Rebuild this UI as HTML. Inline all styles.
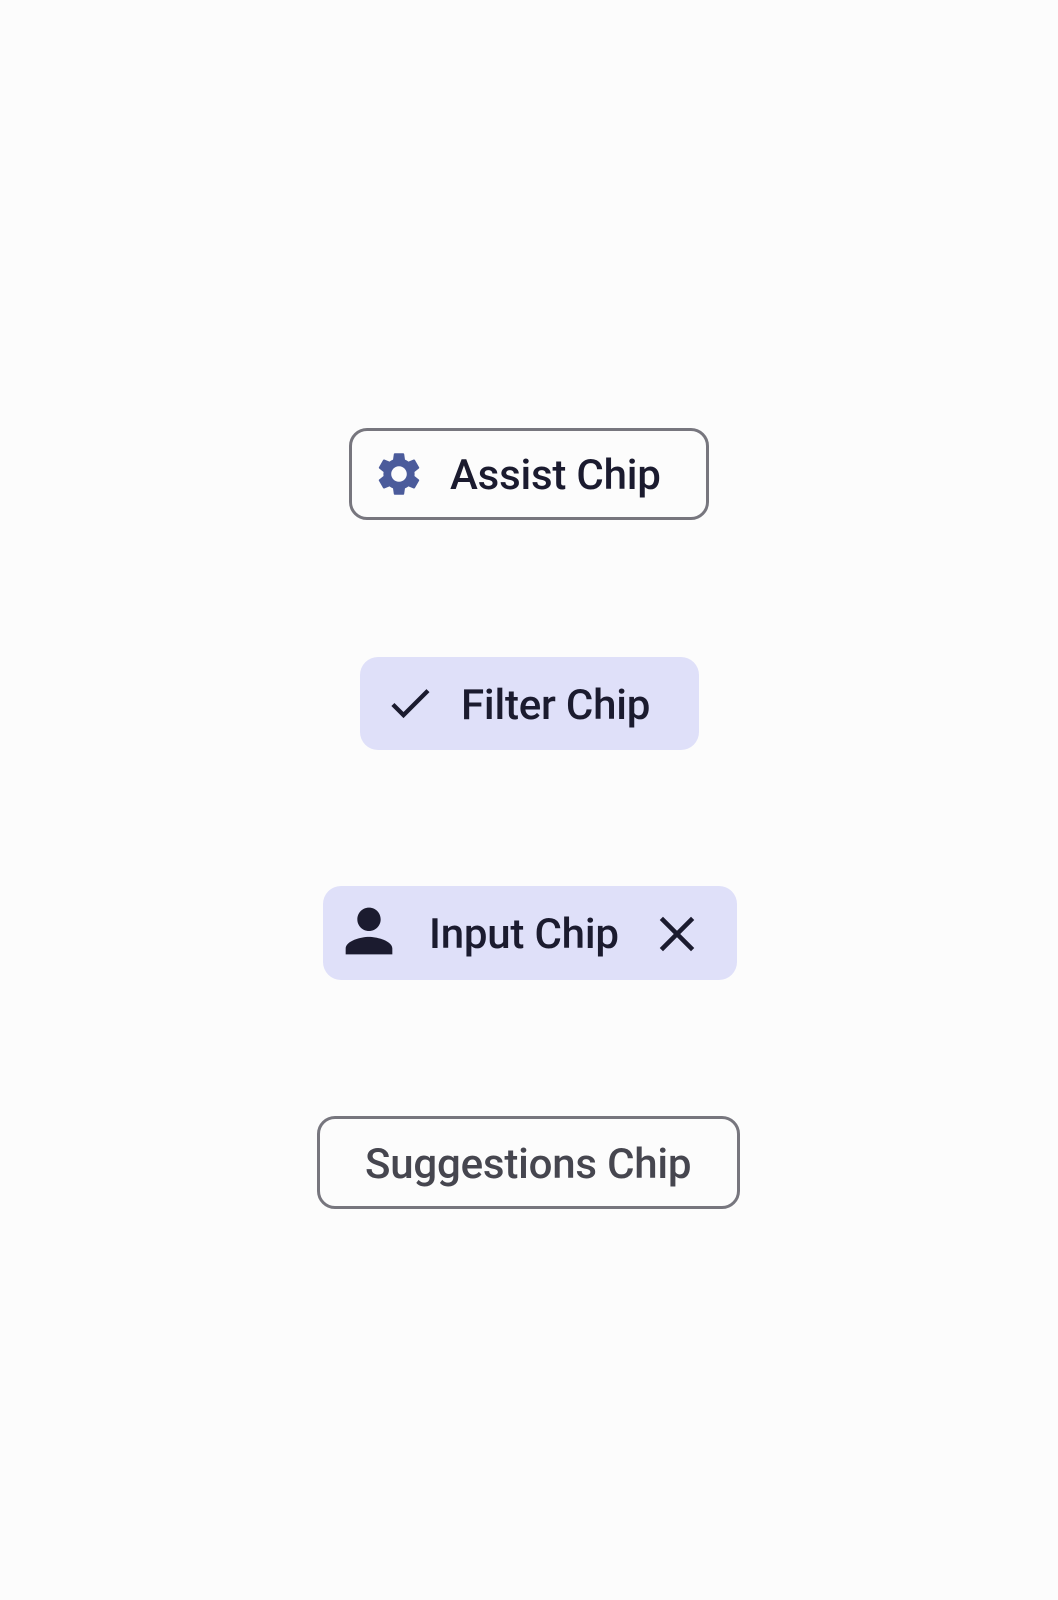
<!DOCTYPE html>
<html><head><style>
html,body{margin:0;padding:0;background:#fcfcfc;width:1058px;height:1600px;overflow:hidden;font-family:Roboto,"Liberation Sans",sans-serif}
.chip{position:absolute;box-sizing:border-box;border-radius:18px}
.t{position:absolute;font-size:42px;font-weight:500;color:#1b1b2f;white-space:nowrap;line-height:1;letter-spacing:-0.2px}
svg{position:absolute}
</style></head><body>
<div class="chip" style="left:349px;top:428px;width:360px;height:92px;border:3px solid #77767e;"></div>
<svg style="left:373px;top:448px" width="52" height="52" viewBox="0 0 24 24"><path fill="#4b5b9b" d="M19.14 12.94c.04-.3.06-.61.06-.94 0-.32-.02-.64-.07-.94l2.03-1.58a.49.49 0 0 0 .12-.61l-1.92-3.32a.49.49 0 0 0-.59-.22l-2.39.96c-.5-.38-1.030-.7-1.62-.94l-.36-2.54a.48.48 0 0 0-.48-.41h-3.84c-.24 0-.43.17-.47.41l-.36 2.54c-.59.24-1.13.57-1.62.94l-2.39-.96a.48.48 0 0 0-.59.22L2.74 8.870c-.12.21-.08.47.12.61l2.03 1.58c-.05.3-.09.63-.09.94s.02.64.07.94l-2.03 1.58a.49.49 0 0 0-.12.61l1.92 3.32c.12.22.37.29.59.22l2.39-.96c.5.38 1.03.7 1.62.94l.36 2.54c.05.24.24.41.48.41h3.84c.24 0 .44-.17.47-.41l.36-2.54c.59-.24 1.13-.56 1.62-.94l2.39.96c.22.08.47 0 .59-.22l1.92-3.32c.12-.22.07-.47-.12-.61l-2.010-1.58zM12 15.6c-1.98 0-3.6-1.62-3.6-3.6s1.62-3.6 3.6-3.6 3.6 1.62 3.6 3.6-1.62 3.6-3.6 3.6z"/></svg>
<div class="t" style="left:450px;top:455px">Assist Chip</div>

<div class="chip" style="left:360px;top:657px;width:339px;height:93px;background:#dfe0f9;"></div>
<svg style="left:384px;top:677px" width="52" height="52" viewBox="0 0 24 24"><path fill="#1b1b2f" d="M9 16.17 4.83 12l-1.42 1.41L9 19 21 7l-1.41-1.41z"/></svg>
<div class="t" style="left:461px;top:685px">Filter Chip</div>

<div class="chip" style="left:323px;top:886px;width:414px;height:94px;background:#dfe0f9;"></div>
<svg style="left:334px;top:896px" width="70" height="70" viewBox="0 0 24 24"><path fill="#1b1b2f" d="M12 12c2.21 0 4-1.79 4-4s-1.79-4-4-4-4 1.79-4 4 1.79 4 4 4zm0 2c-2.67 0-8 1.34-8 4v2h16v-2c0-2.66-5.33-4-8-4z"/></svg>
<div class="t" style="left:429px;top:914px">Input Chip</div>
<svg style="left:652px;top:909px" width="50" height="50" viewBox="0 0 24 24"><path fill="none" stroke="#1b1b2f" stroke-width="2.2" d="M4.5 4.5 19.5 19.5M19.5 4.5 4.5 19.5"/></svg>

<div class="chip" style="left:317px;top:1116px;width:423px;height:93px;border:3px solid #77767e;"></div>
<div class="t" style="left:365px;top:1144px;color:#46464f">Suggestions Chip</div>
</body></html>
